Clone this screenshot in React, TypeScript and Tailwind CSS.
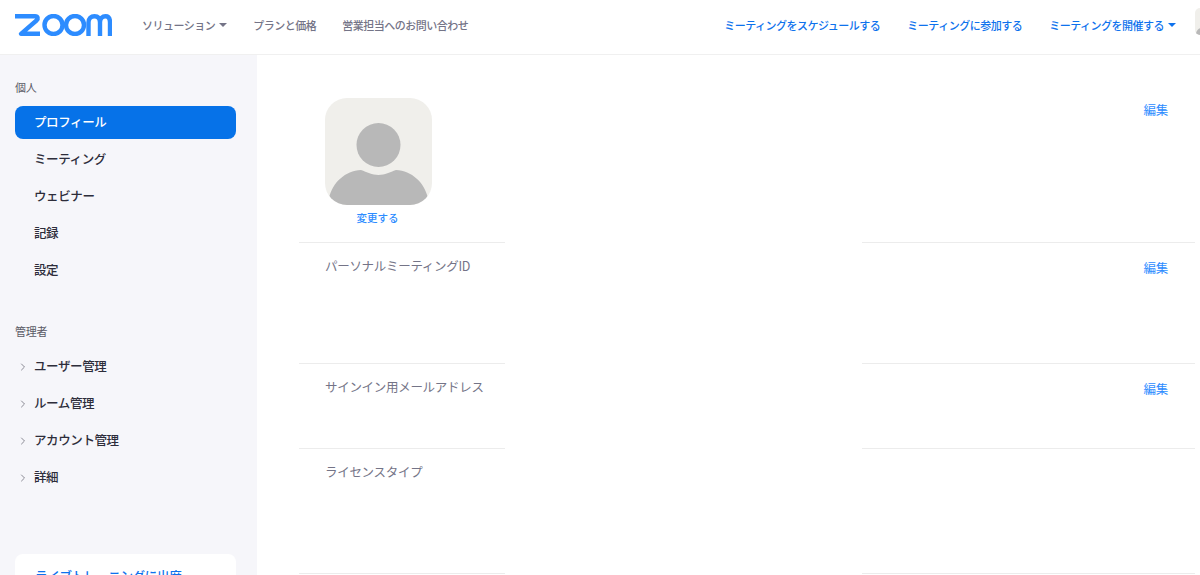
import { ChevronRight } from 'lucide-react';

const jp = "font-['Noto_Sans_CJK_JP','Liberation_Sans',sans-serif]";

function Caret() {
  return <span className="ml-1 inline-block w-0 h-0 border-x-[4px] border-x-transparent border-t-[4px] border-t-current" />;
}

function Logo() {
  return (
    <svg width="97" height="22" viewBox="0 0 97 22" fill="none" className="block">
      <path d="M0 2.200H20C23 2.200 23.500 4.500 21.500 6.500L6 19.800H25" stroke="#2D8CFF" strokeWidth="4.400" strokeLinejoin="round" />
      <circle cx="38.500" cy="11" r="9" stroke="#2D8CFF" strokeWidth="4.400" />
      <circle cx="60" cy="11" r="9" stroke="#2D8CFF" strokeWidth="4.400" />
      <path d="M73.500 22V8.500C73.500 4.500 76 2.200 79.500 2.200C83 2.200 85 4.500 85 8.500V22M85 8.500C85 4.500 87.500 2.200 90.500 2.200C93.500 2.200 95 4.500 95 8.500V22" stroke="#2D8CFF" strokeWidth="4.400" />
    </svg>
  );
}

function Avatar() {
  return (
    <svg width="107" height="107" viewBox="0 0 107 107" className="block rounded-[22px] bg-[#f0efeb]">
      <circle cx="53.500" cy="47" r="22" fill="#b8b8b8" />
      <path d="M4 100C8 84 20 73 36 72C42 74 47 77 53.500 77C60 77 65 74 71 72C87 73 99 84 103 100C101 104 97 107 92 107H15C10 107 6 104 4 100Z" fill="#b8b8b8" />
    </svg>
  );
}

function SideItem({ label, active, arrow }: { label: string; active?: boolean; arrow?: boolean }) {
  return (
    <div
      className={`relative h-[33px] mb-1 flex items-center pl-[19px] rounded-lg text-[12.5px] tracking-[-0.4px] font-medium ${
        active ? 'bg-[#0672e8] text-white' : 'text-[#2d2d3a]'
      }`}
    >
      {arrow && <ChevronRight className="absolute left-0.5 top-[11px] w-3 h-3 text-[#8a8a94]" />}
      {label}
    </div>
  );
}

function Divider() {
  return (
    <div className="flex justify-between h-px">
      <div className="w-[206px] bg-[#ececec]" />
      <div className="w-[333px] bg-[#ececec]" />
    </div>
  );
}

function Row({ label, height, edit }: { label: string; height: string; edit?: boolean }) {
  return (
    <div>
      <div className={`flex justify-between pl-[26px] pr-[27px] pt-[13px] ${height}`}>
        <span className="text-[12.5px] tracking-[-0.3px] leading-5 text-[#747487]">{label}</span>
        {edit && <span className="mt-[2px] text-[12.5px] tracking-[-0.25px] leading-5 text-[#2d8cff]">編集</span>}
      </div>
      <Divider />
    </div>
  );
}

export default function App() {
  return (
    <div className={`h-[575px] w-[1200px] overflow-hidden bg-white ${jp}`}>
      {/* Header */}
      <div className="h-[55px] flex items-center border-b border-[#f0f0f0] pl-[15px] pb-[4px] text-[11px] tracking-[-0.5px] font-medium">
        <Logo />
        <div className="flex items-center gap-[26px] ml-[30px] text-[#747487]">
          <span className="flex items-center">ソリューション<Caret /></span>
          <span>プランと価格</span>
          <span>営業担当へのお問い合わせ</span>
        </div>
        <div className="flex items-center gap-[27px] ml-auto text-[#0e72ed]">
          <span>ミーティングをスケジュールする</span>
          <span>ミーティングに参加する</span>
          <span className="flex items-center">ミーティングを開催する<Caret /></span>
        </div>
        <div className="relative ml-[19px] mb-[7px] w-[5px] h-[27px] overflow-hidden rounded-l-md bg-[#f0efeb]">
          <div className="absolute left-[1px] top-[20px] w-3 h-3 rounded-full bg-[#b8b8b8]" />
        </div>
      </div>

      <div className="flex h-[520px]">
        {/* Sidebar */}
        <div className="w-[257px] shrink-0 bg-[#f6f6fa] pl-[15px] pr-[21px] pt-[24px]">
          <div className="text-[11px] leading-4 tracking-[-0.2px] text-[#5a5a66] mb-[11px]">個人</div>
          <SideItem label="プロフィール" active />
          <SideItem label="ミーティング" />
          <SideItem label="ウェビナー" />
          <SideItem label="記録" />
          <SideItem label="設定" />
          <div className="text-[11px] leading-4 tracking-[-0.2px] text-[#5a5a66] mt-[36px] mb-[11px]">管理者</div>
          <SideItem label="ユーザー管理" arrow />
          <SideItem label="ルーム管理" arrow />
          <SideItem label="アカウント管理" arrow />
          <SideItem label="詳細" arrow />
          <div className="mt-[60px] h-[60px] rounded-lg bg-white pl-[20px] pt-[13px] text-[12.5px] tracking-[-0.3px] font-medium text-[#0e72ed]">
            ライブトレーニングに出席
          </div>
        </div>

        {/* Main */}
        <div className="flex-1 pl-[42px] pr-[5px]">
          <div className="flex justify-between h-[187px] pl-[26px] pr-[27px] pt-[43px]">
            <div className="w-[107px] flex flex-col items-center">
              <Avatar />
              <span className="mt-[5px] -ml-[2px] text-[10.5px] leading-4 font-medium text-[#2d8cff]">変更する</span>
            </div>
            <span className="text-[12.5px] tracking-[-0.25px] leading-5 mt-[2px] text-[#2d8cff]">編集</span>
          </div>
          <Divider />
          <Row label="パーソナルミーティングID" height="h-[120px]" edit />
          <Row label="サインイン用メールアドレス" height="h-[84px]" edit />
          <Row label="ライセンスタイプ" height="h-[124px]" />
        </div>
      </div>
    </div>
  );
}
